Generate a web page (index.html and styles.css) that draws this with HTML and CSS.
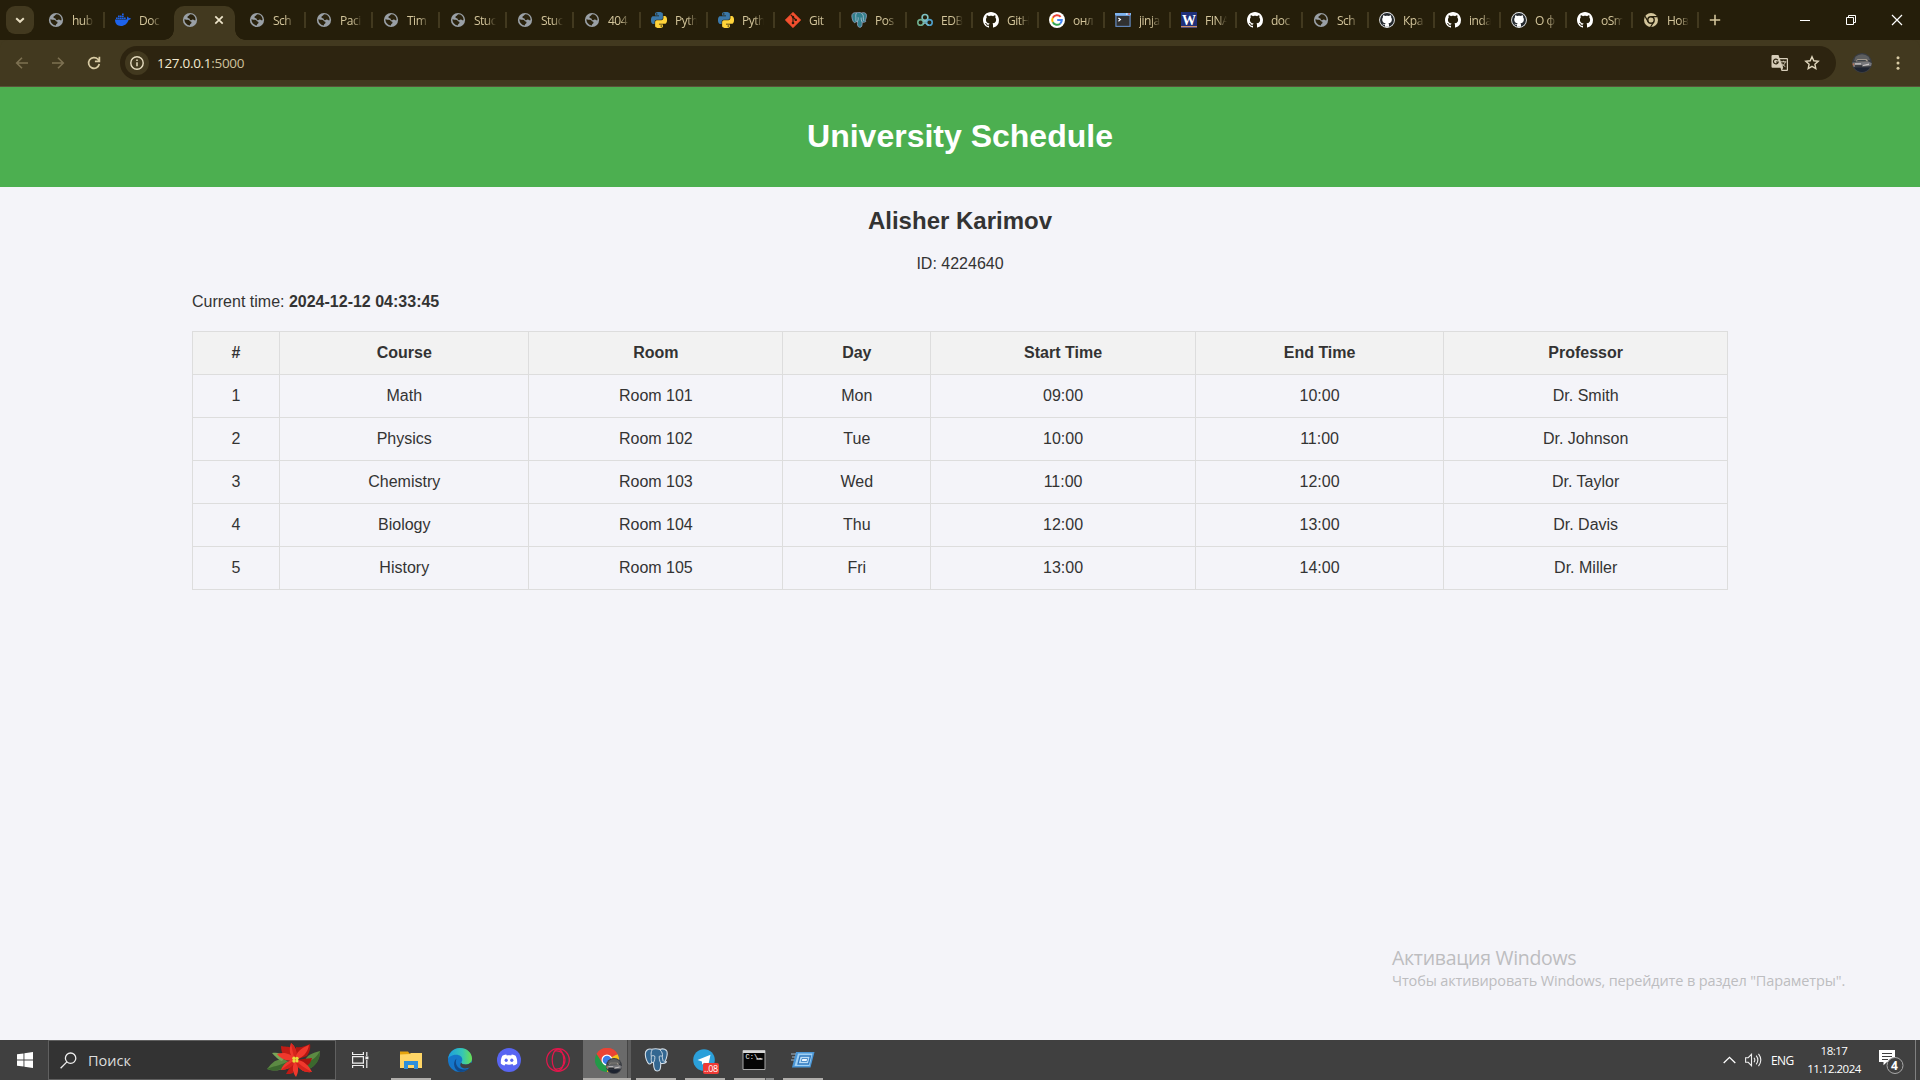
FILE: index.html
```html
<!DOCTYPE html>
<html lang="en">
<head>
<meta charset="utf-8">
<title>University Schedule</title>
<link rel="stylesheet" href="styles.css">
</head>
<body>
<svg class="defs" width="0" height="0">
  <defs>
    <symbol id="globe" viewBox="0 0 16 16"><circle cx="8" cy="8" r="7.100" fill="#9aa0a6"/><path d="M8.800 2.300C7.200 2.300 7.600 3.600 6.300 4 4.900 4.500 5.300 6.300 6.700 6.300c1.300 0 .7 1.600 1.900 1.900 1.300.3 1.800-.9 2.900-.5.8.3 1.200.8 2 .5.3-2.900-1.700-5.700-4.700-5.900zM2.400 7.300c0 3.500 2.600 6 5.500 6.200.2-1 .1-1.300.9-1.800 1.100-.6.9-2.100-.2-2.300-1-.2-1-1.200-1.900-1.500-1.400-.5-2.700.2-4.300-.6z" fill="#2b230e"/></symbol>
    <symbol id="docker" viewBox="0 0 16 16"><path d="M0 7.600h11.500c.5-.2.700-.7.500-1.500-.1-.7.2-1.300.7-1.700.7.5 1 1.100 1 1.800.9-.2 1.700 0 2.300.4-.4.9-1.200 1.400-2.400 1.400C12.300 11.800 9.600 14 6 14 2.100 14 0 11.800 0 7.600z" fill="#1d63ed"/><path d="M1 5.500h1.700v1.600H1zM3 5.500h1.700v1.600H3zM5 5.500h1.700v1.600H5zM7 5.500h1.700v1.600H7zM9 5.500h1.700v1.600H9zM3 3.500h1.700v1.600H3zM5 3.500h1.700v1.600H5zM7 3.500h1.700v1.600H7zM7 1.500h1.700v1.600H7z" fill="#1d63ed"/></symbol>
    <symbol id="python" viewBox="0 0 24 24"><path fill="#3b78a9" d="M14.25.18l.9.2.73.26.59.3.45.32.34.34.25.34.16.33.1.3.04.26.02.2-.01.13V8.500l-.05.63-.13.55-.21.46-.26.38-.3.31-.33.25-.35.19-.35.14-.33.1-.3.07-.26.04-.21.02H8.770l-.69.05-.59.14-.5.22-.41.27-.33.32-.27.35-.2.36-.15.37-.1.35-.07.32-.04.27-.02.21v3.060H3.170l-.21-.03-.28-.07-.32-.12-.35-.18-.36-.26-.36-.36-.35-.46-.32-.59-.28-.73-.21-.88-.14-1.050-.05-1.230.06-1.220.16-1.040.24-.87.32-.71.36-.57.4-.44.42-.33.42-.24.4-.16.36-.1.32-.05.24-.01h.16l.06.01h8.160v-.83H6.180l-.01-2.750-.02-.37.05-.34.11-.31.17-.28.25-.26.31-.23.38-.2.44-.18.51-.15.58-.12.64-.1.71-.06.77-.04.84-.02 1.270.05zm-6.300 1.980l-.23.33-.08.41.08.41.23.34.33.22.41.09.41-.09.33-.22.23-.34.08-.41-.08-.41-.23-.33-.33-.22-.41-.09-.41.09z"/><g transform="rotate(180 12 12)"><path fill="#ffd43b" d="M14.25.18l.9.2.73.26.59.3.45.32.34.34.25.34.16.33.1.3.04.26.02.2-.01.13V8.500l-.05.63-.13.55-.21.46-.26.38-.3.31-.33.25-.35.19-.35.14-.33.1-.3.07-.26.04-.21.02H8.770l-.69.05-.59.14-.5.22-.41.27-.33.32-.27.35-.2.36-.15.37-.1.35-.07.32-.04.27-.02.21v3.060H3.170l-.21-.03-.28-.07-.32-.12-.35-.18-.36-.26-.36-.36-.35-.46-.32-.59-.28-.73-.21-.88-.14-1.050-.05-1.230.06-1.220.16-1.040.24-.87.32-.71.36-.57.4-.44.42-.33.42-.24.4-.16.36-.1.32-.05.24-.01h.16l.06.01h8.160v-.83H6.180l-.01-2.750-.02-.37.05-.34.11-.31.17-.28.25-.26.31-.23.38-.2.44-.18.51-.15.58-.12.64-.1.71-.06.77-.04.84-.02 1.270.05zm-6.300 1.980l-.23.33-.08.41.08.41.23.34.33.22.41.09.41-.09.33-.22.23-.34.08-.41-.08-.41-.23-.33-.33-.22-.41-.09-.41.09z"/></g></symbol>
    <symbol id="git" viewBox="0 0 16 16"><path d="M8 .2 15.800 8 8 15.800.2 8z" fill="#f4502f" stroke="#f4502f" stroke-width=".6" stroke-linejoin="round"/><path d="M5.800 2.800 8 5v6M8 5l2.800 2.900" stroke="#2a1a0c" stroke-width="1.100" fill="none"/><circle cx="8" cy="5" r="1.200" fill="#2a1a0c"/><circle cx="8" cy="11" r="1.300" fill="#2a1a0c"/><circle cx="10.800" cy="7.900" r="1.200" fill="#2a1a0c"/></symbol>
    <symbol id="elephant" viewBox="0 0 24 24"><path d="M7.500 1.200C4 .5 1.300 2.300 1.300 6c0 3.500 1.700 9 3.800 10 .9.400 1.900-.6 2.800-1.600.5.300 1 .4 1.600.4.200 2.700-.2 8.200 3.600 8.200 3.300 0 3.500-2.500 3.700-7.800 2.100.6 4.200.1 5.500-1.200.3-.6-.3-.8-1.300-.7 1.600-2.500 3.200-8.700 1.400-10.800-1.900-1.900-4.500-1.800-6.500-1.100-2.900-.9-5.600-.7-8.400-.2z" fill="#336791" stroke="#d5dfe8" stroke-width="1.100"/><path d="M8.200 1.800C6.800 4 7 6 7.300 8.400c.2 2.200-.6 3.400.6 6M15.700 1.700c2.300 2 3.200 4.200 2.700 7-.3 1.700.6 2.600.8 4.700M7.300 8.300c1-.8 2.400-.9 3.400-.2.500 2.300-.1 4.200-1.200 6.700M18.200 8.400c-1.100-.6-2.100-.5-3 0 0 2.500.3 4.400 1.600 6.900" fill="none" stroke="#d5dfe8" stroke-width=".9"/></symbol>
    <symbol id="pg" viewBox="0 0 24 24"><path d="M7.500 1.200C4 .5 1.300 2.300 1.300 6c0 3.500 1.700 9 3.800 10 .9.400 1.900-.6 2.800-1.600.5.300 1 .4 1.600.4.200 2.700-.2 8.200 3.600 8.200 3.300 0 3.500-2.500 3.700-7.800 2.100.6 4.200.1 5.500-1.200.3-.6-.3-.8-1.300-.7 1.600-2.500 3.200-8.700 1.400-10.800-1.900-1.900-4.500-1.800-6.500-1.100-2.900-.9-5.600-.7-8.400-.2z" fill="#31808d" stroke="#8d9bb8" stroke-width="1.300"/><path d="M8.200 1.800C6.800 4 7 6 7.300 8.400c.2 2.200-.6 3.400.6 6M15.700 1.700c2.300 2 3.200 4.200 2.700 7-.3 1.700.6 2.600.8 4.700M10.700 8c.5 2.300-.1 4.200-1.200 6.700M15.200 8.400c0 2.500.3 4.400 1.600 6.900" fill="none" stroke="#b7c5d8" stroke-width="1.200"/></symbol>
    <symbol id="edb" viewBox="0 0 16 16"><g fill="none" stroke-width="1.600"><circle cx="8" cy="5.400" r="2.900" stroke="#7fc3c4"/><circle cx="3.600" cy="10.400" r="2.800" stroke="#6fae8e"/><circle cx="12.400" cy="10.400" r="2.800" stroke="#4f9fca"/><path d="M5.600 8.200 10 12.200c.6.500 1.300.9 2 .9M10.400 8.200 6 12.200" stroke="#79b8c4" stroke-width="1.300"/></g></symbol>
    <symbol id="github" viewBox="0 0 16 16"><path d="M8 0C3.580 0 0 3.580 0 8c0 3.540 2.290 6.530 5.470 7.590.4.07.55-.17.55-.38 0-.19-.01-.82-.01-1.490-2.010.37-2.530-.49-2.690-.94-.09-.23-.48-.94-.82-1.130-.28-.15-.68-.52-.01-.53.63-.01 1.080.58 1.230.82.72 1.210 1.870.87 2.330.66.07-.52.28-.87.51-1.070-1.780-.2-3.640-.89-3.640-3.950 0-.87.31-1.590.82-2.150-.08-.2-.36-1.020.08-2.120 0 0 .67-.21 2.200.82.64-.18 1.320-.27 2-.27.68 0 1.360.09 2 .27 1.530-1.040 2.200-.82 2.200-.82.44 1.100.16 1.920.08 2.120.51.56.82 1.270.82 2.150 0 3.070-1.870 3.750-3.650 3.950.29.25.54.73.54 1.480 0 1.070-.01 1.930-.01 2.200 0 .21.15.46.55.38A8.013 8.013 0 0016 8c0-4.420-3.580-8-8-8z" fill="#fff"/></symbol>
    <symbol id="github-dark" viewBox="0 0 16 16"><circle cx="8" cy="8" r="7.900" fill="#e8ebee"/><circle cx="8" cy="8" r="7" fill="#24292e"/><path d="M5.700 14.700c.4-.4.300-1.200.3-1.800-1.900.3-2.200-.7-2.500-1.200 1 0 1.200 1 2.600.6.100-.5.300-.8.500-1C4.600 11 3.200 10 3.200 7.500c0-.9.300-1.600.8-2.200-.2-.7-.1-1.400.1-2.100.9 0 1.600.4 2.200.8 1.200-.3 2.300-.3 3.500 0 .6-.4 1.300-.8 2.200-.8.200.7.300 1.400.1 2.100.5.600.8 1.300.8 2.200 0 2.500-1.500 3.500-3.500 3.800.6.500.6 1.300.6 3.400z" fill="#fff"/></symbol>
    <symbol id="google" viewBox="0 0 24 24"><circle cx="12" cy="12" r="12" fill="#fff"/><g fill="none" stroke-width="3"><path d="M17.500 7.200A7.200 7.200 0 0 0 5.700 8.500" stroke="#ea4335"/><path d="M5.700 8.500a7.200 7.200 0 0 0 0 7" stroke="#fbbc05"/><path d="M5.700 15.500A7.200 7.200 0 0 0 16.700 17.500" stroke="#34a853"/><path d="M16.700 17.500A7.200 7.200 0 0 0 19.200 12H12.300" stroke="#4285f4"/></g></symbol>
    <symbol id="jinja" viewBox="0 0 16 16"><rect x=".3" y="1" width="15.400" height="14" fill="#3d4c66"/><rect x="1" y="3.500" width="14" height="10.800" fill="#313131" stroke="#6f9bd6" stroke-width=".9"/><rect x="0" y="1" width="16" height="2.300" fill="#7fb4ef"/><rect x="13.300" y="1.300" width="1.500" height="1.500" fill="#e0533c"/><rect x="11" y="1.300" width="1.500" height="1.500" fill="#dbe9fa"/><path d="m3.400 6 2 1.600-2 1.600" fill="none" stroke="#fff" stroke-width="1.200"/></symbol>
    <symbol id="wiu" viewBox="0 0 16 16"><rect width="16" height="16" fill="#20307a"/><rect y="14" width="16" height="1.300" fill="#c98f6f"/><text x="8" y="12.600" text-anchor="middle" class="w-letter">W</text></symbol>
    <symbol id="chrome-mono" viewBox="0 0 16 16"><circle cx="8" cy="8" r="7" fill="#d3c59b"/><circle cx="8" cy="8" r="3.900" fill="#261f0b"/><circle cx="8" cy="8" r="2.500" fill="#d3c59b"/><path d="M8 4.700h6.500M5.100 9.600 2 4.200M10.900 9.600 7.600 15" stroke="#261f0b" stroke-width="1.200"/></symbol>
    <symbol id="chrome" viewBox="0 0 24 24"><path d="M12 12 1.600 6A12 12 0 0 1 22.400 6z" fill="#ea4335"/><path d="M12 12 22.400 6A12 12 0 0 1 12 24z" fill="#fbc116"/><path d="M12 12v12A12 12 0 0 1 1.600 6z" fill="#229a48"/><path d="M12 6.500h10.700A12 12 0 0 0 1.600 6L7.200 14.700z" fill="#ea4335"/><circle cx="12" cy="12" r="5.500" fill="#fff"/><circle cx="12" cy="12" r="4.300" fill="#3b7de9"/></symbol>
    <symbol id="car" viewBox="0 0 20 20"><circle cx="10" cy="10" r="10" fill="#3a3d43"/><path d="M3.500 3.700A9.500 9.500 0 0 1 16.500 3.700L18 7 2 8z" fill="#5d5e5f"/><path d="M5.500 6h9l2 2.500H3.600z" fill="#a0978c"/><path d="M5.500 7h8l.8 1.200H5z" fill="#3c4248"/><path d="M.4 9.500 17 8.700l2.800 1.500L19 13l-17.500 1z" fill="#77777b"/><path d="M3 10.300h6v1.100H3zM11 12l6-1.400v1.400l-6 1z" fill="#c8c4c4"/><path d="M3 12.300h7v1.400H3z" fill="#24272d"/><path d="M2 14.500h16a9.500 9.500 0 0 1-16 0z" fill="#1d2330"/><path d="M.6 10.500h1.600v2H.8z" fill="#b87355"/></symbol>
  </defs>
</svg>

<header class="tabstrip">
  <button class="tab-search"><svg width="12" height="12" viewBox="0 0 12 12"><path d="m2.200 4.200 3.800 3.600 3.800-3.600" fill="none" stroke="#e6dcc0" stroke-width="2"/></svg></button>
  <div class="tab"><svg><use href="#globe"/></svg><span>hub</span></div>
  <div class="tab last-before"><svg><use href="#docker"/></svg><span>Doc</span></div>
  <div class="tab active"><svg><use href="#globe"/></svg><svg class="close" viewBox="0 0 16 16"><path d="m4.300 4.300 7.400 7.400m0-7.400-7.400 7.400" stroke="#eee5cb" stroke-width="1.700"/></svg></div>
  <div class="tab"><svg><use href="#globe"/></svg><span>Sch</span></div>
  <div class="tab"><svg><use href="#globe"/></svg><span>Paci</span></div>
  <div class="tab"><svg><use href="#globe"/></svg><span>Tim</span></div>
  <div class="tab"><svg><use href="#globe"/></svg><span>Stuc</span></div>
  <div class="tab"><svg><use href="#globe"/></svg><span>Stuc</span></div>
  <div class="tab"><svg><use href="#globe"/></svg><span>404</span></div>
  <div class="tab"><svg><use href="#python"/></svg><span>Pyth</span></div>
  <div class="tab"><svg><use href="#python"/></svg><span>Pyth</span></div>
  <div class="tab slim"><svg><use href="#git"/></svg><span>Git</span></div>
  <div class="tab slim"><svg><use href="#pg"/></svg><span>Pos</span></div>
  <div class="tab slim"><svg><use href="#edb"/></svg><span>EDB</span></div>
  <div class="tab slim"><svg><use href="#github"/></svg><span>GitH</span></div>
  <div class="tab slim"><svg><use href="#google"/></svg><span>онл</span></div>
  <div class="tab slim"><svg><use href="#jinja"/></svg><span>jinja</span></div>
  <div class="tab slim"><svg><use href="#wiu"/></svg><span>FINA</span></div>
  <div class="tab slim"><svg><use href="#github"/></svg><span>doc</span></div>
  <div class="tab slim"><svg><use href="#globe"/></svg><span>Sch</span></div>
  <div class="tab slim"><svg><use href="#github-dark"/></svg><span>Кра</span></div>
  <div class="tab slim"><svg><use href="#github"/></svg><span>inda</span></div>
  <div class="tab slim"><svg><use href="#github-dark"/></svg><span>О ф</span></div>
  <div class="tab slim"><svg><use href="#github"/></svg><span>oSm</span></div>
  <div class="tab slim"><svg><use href="#chrome-mono"/></svg><span>Нов</span></div>
  <svg class="new-tab" viewBox="0 0 12 12"><path d="M6 .8v10.400M.8 6h10.400" stroke="#d3c59b" stroke-width="1.600"/></svg>
  <div class="window-buttons">
    <svg viewBox="0 0 12 12"><path d="M1 6.500h10" stroke="#fff"/></svg>
    <svg viewBox="0 0 12 12"><path d="M1.500 3.500h7v7h-7zM3.500 3.500v-2h7v7h-2" fill="none" stroke="#fff"/></svg>
    <svg viewBox="0 0 12 12"><path d="m1 1 10 10M11 1 1 11" stroke="#fff" stroke-width="1.200"/></svg>
  </div>
</header>

<nav class="toolbar">
  <div class="nav-icons">
    <svg viewBox="0 0 16 16"><path d="M14 8H2.800M8 2.700 2.700 8 8 13.300" fill="none" stroke="#7d7152" stroke-width="1.600"/></svg>
    <svg viewBox="0 0 16 16"><path d="M2 8h11.200M8 2.700 13.300 8 8 13.300" fill="none" stroke="#7d7152" stroke-width="1.600"/></svg>
    <svg viewBox="0 0 16 16"><path d="M13.300 9A5.400 5.400 0 1 1 12 4.300L13.200 5.600M13.400 1.700v4.600H8.900" fill="none" stroke="#d8cba4" stroke-width="1.700"/></svg>
  </div>
  <div class="omnibox">
    <span class="site-info"><svg width="16" height="16" viewBox="0 0 16 16"><circle cx="8" cy="8" r="6.200" fill="none" stroke="#e6dcc0" stroke-width="1.400"/><path d="M8 7.200v4M8 4.600v1.500" stroke="#e6dcc0" stroke-width="1.500"/></svg></span>
    <span class="url">127.0.0.1<i>:5000</i></span>
    <svg class="translate" viewBox="0 0 18 18"><path d="M1.500 1h6l1 3H16a1 1 0 0 1 1 1v11a1 1 0 0 1-1 1h-5.500l-1-3.300h-8A1 1 0 0 1 .5 12.700V2a1 1 0 0 1 1-1z" fill="#d6cdb9"/><path d="M9 5.200h6.800v10.600h-4.600l1-2z" fill="#2d2410"/><path d="M6.900 6.200A2.400 2.400 0 1 0 7.200 8H5" fill="none" stroke="#2d2410" stroke-width="1.200"/><path d="M9.800 7.800h5.500M12.500 6.800v1M14.300 8c-.6 2-2 3.500-3.500 4.500M11 9.500c.8 1.400 1.800 2.300 3.300 3.100" fill="none" stroke="#d6cdb9" stroke-width="1"/></svg>
    <svg class="star" viewBox="0 0 16 16"><path d="m8 1.800 1.800 4 4.400.5-3.300 2.900.9 4.300L8 11.300l-3.800 2.200.9-4.300L1.800 6.300l4.400-.5z" fill="none" stroke="#e0d6bc" stroke-width="1.400"/></svg>
  </div>
  <svg class="profile" viewBox="0 0 20 20"><use href="#car"/></svg>
  <svg class="menu-dots" viewBox="0 0 4 16"><g fill="#d8cba4"><circle cx="2" cy="2.700" r="1.500"/><circle cx="2" cy="8" r="1.500"/><circle cx="2" cy="13.300" r="1.500"/></g></svg>
</nav>

<main class="page">
  <div class="banner"><h1>University Schedule</h1></div>
  <section class="container">
    <h2>Alisher Karimov</h2>
    <p class="student-id">ID: 4224640</p>
    <p class="clock">Current time: <strong>2024-12-12 04:33:45</strong></p>
    <table>
      <thead><tr><th>#</th><th>Course</th><th>Room</th><th>Day</th><th>Start Time</th><th>End Time</th><th>Professor</th></tr></thead>
      <tbody>
        <tr><td>1</td><td>Math</td><td>Room 101</td><td>Mon</td><td>09:00</td><td>10:00</td><td>Dr. Smith</td></tr>
        <tr><td>2</td><td>Physics</td><td>Room 102</td><td>Tue</td><td>10:00</td><td>11:00</td><td>Dr. Johnson</td></tr>
        <tr><td>3</td><td>Chemistry</td><td>Room 103</td><td>Wed</td><td>11:00</td><td>12:00</td><td>Dr. Taylor</td></tr>
        <tr><td>4</td><td>Biology</td><td>Room 104</td><td>Thu</td><td>12:00</td><td>13:00</td><td>Dr. Davis</td></tr>
        <tr><td>5</td><td>History</td><td>Room 105</td><td>Fri</td><td>13:00</td><td>14:00</td><td>Dr. Miller</td></tr>
      </tbody>
    </table>
  </section>
  <aside class="watermark"><div class="wm-title">Активация Windows</div><div class="wm-text">Чтобы активировать Windows, перейдите в раздел "Параметры".</div></aside>
</main>

<footer class="taskbar">
  <div class="start"><svg width="16" height="16" viewBox="0 0 16 16"><path d="M0 2.300 6.500 1.400v6.200H0zM7.400 1.200 16 0v7.600H7.400zM0 8.400h6.500v6.200L0 13.700zM7.400 8.400H16V16l-8.600-1.200z" fill="#fff"/></svg></div>
  <div class="search">
    <svg width="17" height="17" viewBox="0 0 17 17"><circle cx="10.600" cy="6.200" r="5.200" fill="none" stroke="#eee" stroke-width="1.300"/><path d="m6.900 9.900-6.300 6.400" stroke="#eee" stroke-width="1.300"/></svg>
    <span>Поиск</span>
    <svg class="flower" width="54" height="34" viewBox="0 0 54 34">
      <path d="M0 26c3-3 6-10 17-10l6 4c-6 8-15 9-23 6z" fill="#5c8a43"/>
      <path d="M53 8c-7 2-14 4-15 10l4 8c6-3 11-9 11-18z" fill="#5c8a43"/>
      <path d="M5 10c5-1 9 0 13 4l-3 4c-4-1-7-5-10-8z" fill="#79a558"/>
      <path d="M0 26c6-3 12-3 20-7v4c-6 5-14 5-20 3zM53 8c-3 6-8 9-13 12l2 6c7-3 11-9 11-18z" fill="#3c682e"/>
      <path d="M14 3c4 1 7 0 11 2l3 12-11-4c-2-3-3-6-3-10z" fill="#c21c15"/>
      <path d="M29 4c5 1 9-1 14-3 1 5-1 9-3 12l-12 4z" fill="#b31712"/>
      <path d="M28 17 45 15c-1 4-3 7-6 8l-10-3z" fill="#a81410"/>
      <path d="M27 17l-8 14c3 0 5 0 7-1z" fill="#bf1a15"/>
      <path d="M28 17C22 12 22 6 24 0c5 4 7 10 4 17zM28 17c1-8 6-12 14-15-1 7-6 13-14 15zM28 17c7-1 14 5 17 12-8 1-15-3-17-12zM28 17c4 6 4 12 1 17-4-5-4-11-1-17zM28 17c-1 6-7 10-14 10 2-6 7-10 14-10zM28 17c-8 2-14-1-18-6 7-2 14-1 18 6z" fill="#f0382c"/>
      <path d="M28 17C26 11 25 6 24 0c5 4 7 10 4 17zM28 17c5 5 10 8 17 12-8 1-15-3-17-12zM28 17c-5 3-9 6-14 10 7 0 13-4 14-10z" fill="#d6241d"/>
      <g fill="#e7dc3c"><circle cx="27" cy="15.200" r="1.700"/><circle cx="30" cy="15.500" r="1.700"/><circle cx="27" cy="18" r="1.700"/><circle cx="30" cy="18" r="1.500"/></g>
    </svg>
  </div>
  <svg class="task-view" width="17" height="16" viewBox="0 0 17 16"><path d="M.6 0v2.500h10.800V0M.6 16v-2.500h10.800V16M.6 4.600h10.800v6.500H.6zM14.800 0v4M14.800 8v8" fill="none" stroke="#eee" stroke-width="1.200"/><path d="M13.400 4.500h3v2.800h-3z" fill="#eee"/></svg>
  <div class="apps">
    <div class="app open"><svg viewBox="0 0 24 24"><path d="M1 3.500h8l1.500 2H23V20H1z" fill="#e5a40d"/><path d="M1 6.500 11 6l1-1h11v15H1z" fill="#ffd666"/><path d="M5 21v-8h14v8h-4v-4H9v4z" fill="#2e8fdb"/></svg></div>
    <div class="app"><svg viewBox="0 0 24 24"><defs><linearGradient id="e1" x2="1"><stop stop-color="#1b9de0"/><stop offset=".6" stop-color="#36c6b5"/><stop offset="1" stop-color="#6be04f"/></linearGradient></defs><circle cx="12" cy="12" r="12" fill="#1576c9"/><path d="M0 11C.8 4.500 6 0 12 0c7 0 12 5 12 10.500 0 4-3 6-6.200 6-2.800 0-4.500-1-4.500-2 0-.8 1-1 1-3 0-2.500-2.500-4.700-6-4.700C4.500 6.800 1 8.500 0 11z" fill="url(#e1)"/><path d="M8.500 10.500C6 17 11 21.500 16 21.500c2.300 0 4.300-.8 5.500-1.800C19.500 22.500 16 24 12.500 24 7 23.500 3.500 15 8.500 10.500z" fill="#114a8b"/><path d="M13.300 14.500c0 1 1.700 2 4.500 2 1.900 0 3.700-.7 4.900-2l1.300.5v4l-2 .3c-1 .5-3 1.200-5 1.200-4-.3-6-3-3.700-6z" fill="#404040"/></svg></div>
    <div class="app"><svg viewBox="0 0 24 24"><circle cx="12" cy="12" r="12" fill="#5865f2"/><path d="M9.500 6.700 9 6.500c-1.500.2-2.600.6-3.600 1.200C4 10 3.600 12.800 3.900 15.700c1.300 1 2.500 1.500 3.700 1.800l.9-1.400c2.200.9 4.800.9 7 0l.9 1.400c1.200-.3 2.400-.8 3.700-1.800.3-2.900-.1-5.700-1.500-8-1-.6-2.100-1-3.600-1.200l-.5.2-.3.800c-1.500-.2-2.900-.2-4.400 0z" fill="#fff"/><ellipse cx="9.200" cy="12.200" rx="1.600" ry="1.800" fill="#5865f2"/><ellipse cx="14.800" cy="12.200" rx="1.600" ry="1.800" fill="#5865f2"/></svg></div>
    <div class="app"><svg viewBox="0 0 24 24"><g fill="none" stroke="#e2174c" stroke-width="1.200"><circle cx="12" cy="12" r="11.300"/><ellipse cx="12" cy="12" rx="5.800" ry="10.800"/><path d="M9 3c6-1 10 3.500 10 9s-4 10-10 9"/></g></svg></div>
    <div class="app open current"><svg viewBox="0 0 24 24"><use href="#chrome"/></svg><svg class="badge-car" viewBox="0 0 20 20"><use href="#car"/></svg></div>
    <div class="app open"><svg viewBox="0 0 24 24"><use href="#elephant"/></svg></div>
    <div class="app open"><svg viewBox="0 0 24 24"><circle cx="11" cy="12" r="10.800" fill="#2ba0da"/><path d="m4.500 12 13-5.300-2.300 11-4-3-2 2-.3-3.300z" fill="#fff"/></svg><span class="badge">..08</span></div>
    <div class="app open stacked"><svg viewBox="0 0 24 24"><path d="M1 2.500h22v19H1z" fill="#050505" stroke="#a8a8a8"/><path d="M1 2.500h22V5H1z" fill="#d8d8d8"/><text x="3.500" y="11" class="prompt">C:\.</text><path d="M14.500 11h6" stroke="#fff" stroke-width="1.200"/></svg></div>
    <div class="app open"><svg viewBox="0 0 24 24"><path d="M5 4h18.500l-4 15.500H1z" fill="#4a96d6"/><path d="M7 5.500h14.500L18.500 18H3.500z" fill="#9fd0f4"/><path d="M9 8h10.500l-2 8H7z" fill="#b9dcf7" stroke="#2f78bf" stroke-width="1.300"/><path d="M11 10.500h5.700l-.8 3h-5.700z" fill="#eef7fe" stroke="#2f78bf" stroke-width=".8"/><path d="M0 6h5M1 9h3M0 12h3" stroke="#9fb6c9"/></svg></div>
  </div>
  <div class="tray">
    <svg width="13" height="8" viewBox="0 0 13 8"><path d="m.7 7 5.800-5.700L12.300 7" fill="none" stroke="#fff" stroke-width="1.300"/></svg>
    <svg width="17" height="14" viewBox="0 0 17 14"><path d="M.6 4.700h2.600l3.300-3.400v11.400L3.200 9.300H.6zM9 4.700c1 1.400 1 3.200 0 4.600M11.200 2.700c2 2.600 2 6 0 8.600M13.500.9c2.800 3.700 2.800 8.500 0 12.200" fill="none" stroke="#eee" stroke-width="1.100"/></svg>
    <span class="lang">ENG</span>
    <div class="date"><span>18:17</span><span>11.12.2024</span></div>
    <div class="notify"><svg width="26" height="26" viewBox="0 0 26 26"><path d="M0 1h16v12H8l-3.500 3.200V13H0z" fill="#fff"/><path d="M3 4.500h10M3 7.500h10M3 10.500h6" stroke="#404040"/><circle cx="16" cy="16.500" r="8" fill="#404040" stroke="#a9a9a9" stroke-width="1"/></svg><b>4</b></div>
    <i class="show-desktop"></i>
  </div>
</footer>
</body>
</html>
```
FILE: styles.css
```css
* { box-sizing: border-box; }
body {
  margin: 0;
  height: 1080px;
  display: flex;
  flex-direction: column;
  overflow: hidden;
  background: #42391f;
  font-family: "Liberation Sans", Arial, sans-serif;
  color: #333;
}
.defs { position: absolute; }
svg { flex: none; display: block; }

/* Browser tabs */
.tabstrip {
  flex: none;
  height: 40px;
  display: flex;
  align-items: center;
  padding-left: 6px;
  background: #251e0a;
  font: 12px "Open Sans", "Noto Sans", sans-serif;
  letter-spacing: -0.5px;
  color: #d3c59b;
}
.tab-search {
  width: 28px;
  height: 28px;
  margin: 0 4px 0 0;
  padding: 0;
  border: 0;
  border-radius: 9px;
  background: #42391f;
  display: flex;
  align-items: center;
  justify-content: center;
}
.tab {
  flex: none;
  width: 67px;
  height: 16px;
  padding-left: 10px;
  display: flex;
  align-items: center;
  gap: 8px;
  border-right: 2px solid #42391f;
}
.tab.slim { width: 66px; }
.tab svg { width: 16px; height: 16px; }
.tab span {
  width: 22px;
  overflow: hidden;
  white-space: nowrap;
  padding-top: 1px;
  -webkit-mask-image: linear-gradient(90deg, #000 55%, transparent);
  mask-image: linear-gradient(90deg, #000 55%, transparent);
}
.tab.last-before { border-color: transparent; }
.tab.active {
  position: relative;
  width: 61px;
  height: 34px;
  margin: 6px 4px 0 2px;
  padding: 0 0 6px 8px;
  gap: 13px;
  border: 0;
  border-radius: 10px 10px 0 0;
  background: #42391f;
}
.tab.active::before,
.tab.active::after {
  content: "";
  position: absolute;
  bottom: 0;
  width: 10px;
  height: 10px;
}
.tab.active::before { left: -10px; background: radial-gradient(circle at 0 0, transparent 9.5px, #42391f 10px); }
.tab.active::after { right: -10px; background: radial-gradient(circle at 100% 0, transparent 9.5px, #42391f 10px); }
.w-letter { font: bold 14px "Liberation Serif", serif; fill: #fff; letter-spacing: 0; }
.new-tab { width: 12px; height: 12px; margin-left: 10px; }
.window-buttons {
  margin-left: auto;
  padding-right: 17px;
  display: flex;
  gap: 34px;
}
.window-buttons svg { width: 12px; height: 12px; }

/* Address bar */
.toolbar {
  flex: none;
  height: 47px;
  display: flex;
  align-items: center;
  padding: 0 20px 1px 14px;
  border-bottom: 1px solid #5a5139;
  border-radius: 8px 8px 0 0;
  background: #42391f;
}
.nav-icons { display: flex; gap: 20px; }
.nav-icons svg { width: 16px; height: 16px; }
.omnibox {
  width: 1716px;
  height: 34px;
  margin-left: 18px;
  padding: 0 16px 0 5px;
  display: flex;
  align-items: center;
  border-radius: 17px;
  background: #2d2410;
}
.site-info {
  width: 24px;
  height: 24px;
  border-radius: 12px;
  display: flex;
  align-items: center;
  justify-content: center;
  background: #42391f;
}
.url {
  margin-left: 8px;
  font: 13.5px "Open Sans", "Noto Sans", sans-serif;
  letter-spacing: -0.3px;
  color: #f3ead0;
}
.url i { font-style: normal; color: #cdc19c; }
.translate { width: 18px; height: 18px; margin-left: auto; }
.star { width: 16px; height: 16px; margin-left: 15px; }
.profile { width: 20px; height: 20px; margin-left: 16px; }
.menu-dots { width: 4px; height: 16px; margin-left: auto; }

/* Schedule page */
.page {
  position: relative;
  flex: 1;
  background: #f4f4f9;
}
.banner {
  height: 100px;
  padding-bottom: 2px;
  display: flex;
  align-items: center;
  justify-content: center;
  background: #4caf50;
}
h1 { margin: 0; font-size: 32px; line-height: 36px; color: #fff; }
.container { width: 80%; margin: 0 auto; padding-top: 20px; }
h2 { margin: 0 0 20px; font-size: 24px; line-height: 28px; text-align: center; }
p { margin: 0 0 20px; font-size: 16px; line-height: 18px; }
.student-id { text-align: center; }
table { width: 100%; border-collapse: collapse; font-size: 16px; line-height: 18px; text-align: center; }
th, td { padding: 12px; border: 1px solid #ddd; }
th { background: #f2f2f2; }
.watermark {
  position: absolute;
  left: 1392px;
  top: 857px;
  font-family: "Open Sans", "Noto Sans", sans-serif;
  color: #bdbdc0;
  white-space: nowrap;
}
.wm-title { font-size: 19.5px; line-height: 28px; letter-spacing: -0.3px; }
.wm-text { font-size: 14.5px; line-height: 18px; letter-spacing: -0.14px; }

/* Taskbar */
.taskbar {
  flex: none;
  height: 40px;
  display: flex;
  align-items: center;
  background: #404040;
  font-family: "Open Sans", "Noto Sans", sans-serif;
  color: #fff;
}
.start { width: 48px; display: flex; justify-content: center; padding-left: 1px; }
.search {
  width: 288px;
  height: 40px;
  padding: 0 14px 0 11px;
  display: flex;
  align-items: center;
  border: 1px solid #606060;
  background: #333;
  font-size: 14.5px;
  color: #ddd;
}
.search span { margin-left: 11px; }
.flower { margin-left: auto; }
.task-view { margin-left: 16px; }
.apps { margin-left: 22px; height: 40px; display: flex; gap: 9px; }
.app {
  position: relative;
  width: 40px;
  height: 40px;
  display: flex;
  align-items: center;
  justify-content: center;
}
.app svg { width: 24px; height: 24px; }
.app.open { box-shadow: inset 0 -2px #b0aeab; }
.app.current {
  width: 48px;
  margin: 0 -4px;
  background: linear-gradient(90deg, #6a6a6a 44px, #444 44px 45px, #5c5c5c 45px);
}
.app.stacked { box-shadow: none; background: linear-gradient(90deg, #b0aeab 31px, #555 31px 32px, #898989 32px) bottom / 100% 2px no-repeat; }
.app .badge-car { position: absolute; left: 23px; top: 18px; width: 16px; height: 16px; }
.badge {
  position: absolute;
  left: 18px;
  top: 23px;
  width: 16px;
  height: 11px;
  border-radius: 2px;
  background: #ee3a35;
  font-size: 9px;
  line-height: 11px;
  letter-spacing: -0.3px;
  text-align: center;
}
.prompt { font: 7px "Liberation Mono", monospace; fill: #fff; }
.tray { margin-left: auto; display: flex; align-items: center; height: 40px; }
.tray > svg + svg { margin-left: 9px; }
.lang { margin-left: 9px; width: 24px; font-size: 12px; letter-spacing: -0.6px; }
.date {
  width: 54px;
  margin-left: 12px;
  padding-bottom: 1px;
  display: flex;
  flex-direction: column;
  align-items: center;
  font-size: 11.5px;
  line-height: 18px;
  letter-spacing: -0.5px;
}
.notify { position: relative; margin-left: 18px; padding-top: 4px; }
.notify b { position: absolute; left: 12px; top: 12px; font-size: 12px; line-height: 17px; }
.show-desktop { width: 5px; height: 40px; margin-left: 10px; border-left: 1px solid #808080; }
```
